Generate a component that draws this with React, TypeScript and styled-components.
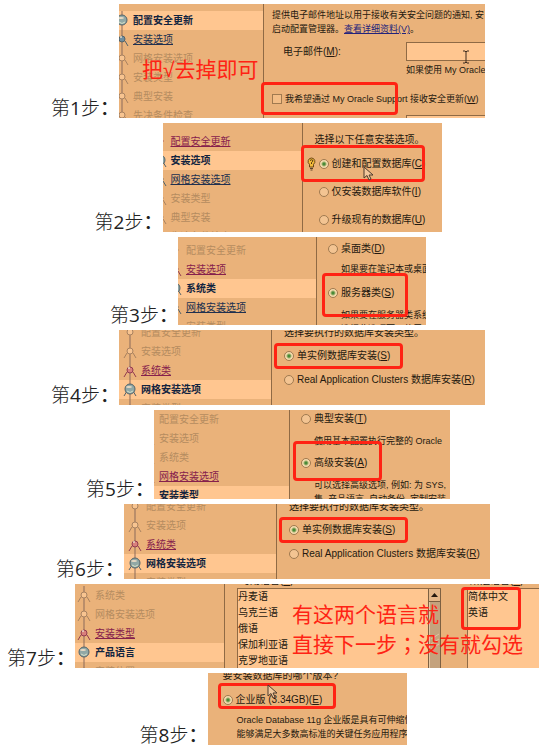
import React from "react";
import styled, { createGlobalStyle, css } from "styled-components";

const GlobalStyle = createGlobalStyle`
  * { box-sizing: border-box; }
  body { margin: 0; background: #ffffff; }
  svg { flex: none; }
`;

const uiFont = `"Liberation Sans", "Noto Sans CJK SC", sans-serif`;
const color = {
  panel: "#eab27a",
  light: "#ffc690",
  ink: "#24190f",
  dim: "#b58c60",
  link: "#20304f",
  visited: "#86204c",
  strong: "#12243f",
  line: "#8f6a45",
  red: "#ff2314",
};

const Page = styled.main`
  display: flex;
  flex-direction: column;
  gap: 5px;
  padding: 4px 0 2px;
`;

const StepGroup = styled.div<{ $inset: number }>`
  display: flex;
  flex-direction: column;
  gap: 5px;
  padding-right: ${(p) => p.$inset}px;
`;

const StepRow = styled.section`
  display: flex;
  justify-content: center;
  align-items: flex-end;
`;

const StepLabel = styled.h2`
  flex: 0 0 68px;
  margin: 0;
  font: 300 19px/20px "Open Sans", "Noto Sans CJK SC", sans-serif;
  color: #222222;
  white-space: nowrap;
`;

const Digit = styled.span`
  font-weight: 400;
`;

const Colon = styled.span`
  font-weight: 500;
`;

const Panel = styled.div<{ $width: number; $height: number }>`
  position: relative;
  display: flex;
  flex: 0 1 ${(p) => p.$width}px;
  height: ${(p) => p.$height}px;
  overflow: hidden;
  background: ${color.panel};
  color: ${color.ink};
  font: 10px/14px ${uiFont};
  white-space: nowrap;
`;

const Sidebar = styled.nav<{ $width: number; $top: number }>`
  flex: 0 0 ${(p) => p.$width}px;
  height: max-content;
  min-height: 100%;
  margin-top: ${(p) => p.$top}px;
`;

const Divider = styled.div`
  flex: 0 0 1px;
  background: ${color.line};
`;

type Tone = "dim" | "link" | "visited" | "current";

const NavRow = styled.div<{ $current: boolean }>`
  display: flex;
  align-items: center;
  height: 19px;
  background: ${(p) => (p.$current ? color.light : "transparent")};
`;

const Rail = styled.span<{ $width: number }>`
  display: flex;
  justify-content: flex-end;
  flex: 0 0 ${(p) => p.$width}px;
  overflow: hidden;
`;

const NavLink = styled.a<{ $tone: Tone }>`
  color: ${(p) => (p.$tone === "visited" ? color.visited : p.$tone === "link" ? color.link : p.$tone === "current" ? color.strong : color.dim)};
  font-weight: ${(p) => (p.$tone === "current" ? 700 : 400)};
  text-decoration: ${(p) => (p.$tone === "link" || p.$tone === "visited" ? "underline" : "none")};
  text-underline-offset: 1px;
`;

const Content = styled.div<{ $top: number; $left?: number }>`
  flex: 1 1 0;
  min-width: 0;
  margin-top: ${(p) => p.$top}px;
  padding-left: ${(p) => p.$left ?? 12}px;
`;

const Choices = styled.div`
  margin-top: 3px;
  padding-left: 4px;
`;

const Copy = styled.p<{ $above?: number; $indent?: number }>`
  margin: ${(p) => p.$above ?? 0}px 0 0;
  padding-left: ${(p) => p.$indent ?? 0}px;
  font-size: 9px;
`;

const Prompt = styled.p`
  margin: 0;
`;

const InlineLink = styled.a`
  color: #23237c;
`;

const Choice = styled.label<{ $above?: number; $height?: number }>`
  display: flex;
  align-items: center;
  gap: 3px;
  height: ${(p) => p.$height ?? 16}px;
  margin-top: ${(p) => p.$above ?? 0}px;
`;

const HintSlot = styled.span`
  display: flex;
  flex: 0 0 9px;
  margin-left: -12px;
`;

const boxBase = css`
  appearance: none;
  flex: none;
  width: 10px;
  height: 10px;
  margin: 0;
  border: 1px solid #a07a50;
`;

const Radio = styled.input`
  ${boxBase}
  border-radius: 50%;
  background: #f3c492;
  &:checked {
    background: radial-gradient(circle, #4a8a36 0 1px, #f6dcae 3px);
  }
`;

const Tick = styled.input`
  ${boxBase}
  background: #f3bd86;
`;

const TickLabel = styled.label`
  display: flex;
  align-items: center;
  gap: 3px;
  height: 20px;
  margin-top: 12px;
  font-size: 9px;
`;

const EmailForm = styled.div`
  display: grid;
  grid-template-columns: 123px 1fr;
  align-items: center;
  margin-top: 6px;
  padding-left: 11px;
`;

const TextBox = styled.input`
  width: 100%;
  height: 19px;
  border: 1px solid ${color.line};
  border-right: 0;
  border-radius: 0;
  background: ${color.light};
`;

const EmailHint = styled.span`
  grid-column: 2;
  margin-top: 2px;
  font-size: 9px;
`;

const ServerBox = styled(TextBox)`
  grid-column: 2;
`;

const Frame = styled.div<{ $x: number; $y: number; $w: number; $h: number }>`
  position: absolute;
  left: ${(p) => p.$x}px;
  top: ${(p) => p.$y}px;
  width: ${(p) => p.$w}px;
  height: ${(p) => p.$h}px;
  border: 3px solid ${color.red};
  border-radius: 4px;
  pointer-events: none;
`;

const Note = styled.p<{ $x: number; $y: number }>`
  position: absolute;
  left: ${(p) => p.$x}px;
  top: ${(p) => p.$y}px;
  margin: 0;
  color: ${color.red};
  font: 400 21px/28px ${uiFont};
`;

const CenteredMark = styled.span`
  font-family: "Noto Sans CJK TC", sans-serif;
`;

const Pointer = styled.svg<{ $x: number; $y: number }>`
  position: absolute;
  left: ${(p) => p.$x}px;
  top: ${(p) => p.$y}px;
`;

const Languages = styled.div`
  display: grid;
  grid-template-columns: 204px 1fr;
  column-gap: 26px;
  flex: 1 1 0;
  min-width: 0;
  margin-top: -10px;
  padding-left: 12px;
`;

const ListTitle = styled.div`
  height: 14px;
  padding-left: 3px;
`;

const ListBody = styled.div`
  display: flex;
  height: 100%;
  border: solid ${color.line};
  border-width: 1px 0 0 1px;
  background: ${color.light};
`;

const Options = styled.ul`
  flex: 1;
  margin: 0;
  padding: 0;
  list-style: none;
  line-height: 16px;
`;

const ScrollBar = styled.div`
  display: flex;
  flex-direction: column;
  flex: 0 0 13px;
  border: solid #7d6042;
  border-width: 0 1px;
  background: #c9a883;
`;

const ScrollUp = styled.button`
  display: flex;
  align-items: center;
  justify-content: center;
  height: 13px;
  padding: 0;
  border: 0;
  border-bottom: 1px solid #7d6042;
  background: #e5b88a;
`;

const Thumb = styled.div`
  display: flex;
  align-items: center;
  justify-content: center;
  flex: 1;
  border-left: 1px solid #e6c8a4;
  background: #c4a27d;
`;

interface NavItem {
  text: string;
  tone: Tone;
  legs?: boolean;
}

const Node = ({ tone, legs = true }: { tone: Tone; legs?: boolean }) => {
  const stroke = tone === "dim" ? "#a98260" : tone === "visited" ? "#923c50" : "#53636a";
  const fill = tone === "dim" ? "#f8c490" : tone === "visited" ? "#d9807c" : tone === "link" ? "#6f8ea0" : "#91a8a6";
  const r = tone === "current" ? 5 : 3;
  return (
    <svg width="22" height="19" viewBox="0 0 22 19" aria-hidden="true">
      <path d="M11 0V19" stroke="#8b6a5a" />
      {legs && <path d="M8 11L5 16M14 11L17 16" stroke={stroke} fill="none" />}
      <circle cx="11" cy="9" r={r} fill={fill} stroke={stroke} />
      {tone !== "dim" && <ellipse cx="10" cy="7" rx={r - 2} ry="1" fill="#e8d9c4" />}
      {tone === "current" && <path d="M8 11Q11 14 14 11" stroke="#d5e0c8" fill="none" />}
    </svg>
  );
};

const Nav = ({ items, width, top, rail }: { items: NavItem[]; width: number; top: number; rail: number }) => (
  <>
    <Sidebar $width={width} $top={top}>
      {items.map((item) => (
        <NavRow key={item.text} $current={item.tone === "current"}>
          <Rail $width={rail}>
            <Node tone={item.tone} legs={item.legs} />
          </Rail>
          <NavLink $tone={item.tone} href="#">{item.text}</NavLink>
        </NavRow>
      ))}
    </Sidebar>
    <Divider />
  </>
);

const Step = ({ n, width, height, children }: { n: number; width: number; height: number; children: React.ReactNode }) => (
  <StepRow>
    <StepLabel>第<Digit>{n}</Digit>步<Colon>：</Colon></StepLabel>
    <Panel $width={width} $height={height}>{children}</Panel>
  </StepRow>
);

interface OptionProps {
  group: string;
  text: string;
  hotkey: string;
  checked?: boolean;
  above?: number;
  height?: number;
  hint?: boolean;
}

const Option = ({ group, text, hotkey, checked, above, height, hint }: OptionProps) => (
  <Choice $above={above} $height={height}>
    {hint && (
      <HintSlot>
        <svg width="9" height="14" viewBox="0 0 9 14" aria-hidden="true">
          <path d="M4.500 1a3.500 3.500 0 0 0-2 6.300V10h4V7.300a3.500 3.500 0 0 0-2-6.300Z" fill="#f5bd3c" stroke="#6b4717" />
          <path d="M3 3.500q1.500-1.500 3 0q0 1-1.500 2V7" stroke="#53350e" fill="none" />
          <path d="M3 11.500h3M3.500 13h2" stroke="#5b432a" />
        </svg>
      </HintSlot>
    )}
    <Radio type="radio" name={group} defaultChecked={checked} />
    <span>{text}(<u>{hotkey}</u>)</span>
  </Choice>
);

const Arrow = ({ x, y }: { x: number; y: number }) => (
  <Pointer $x={x} $y={y} width="12" height="16" viewBox="0 0 12 16" aria-hidden="true">
    <path d="M1 1V12L4 9.500L6 14L8 13L6 9H10Z" fill="#f2c79c" stroke="#4d3b2c" />
  </Pointer>
);

const singleInstanceNav: NavItem[] = [
  { text: "配置安全更新", tone: "dim", legs: false },
  { text: "安装选项", tone: "dim" },
  { text: "系统类", tone: "visited" },
  { text: "网格安装选项", tone: "current" },
  { text: "安装类型", tone: "dim" },
];

const SingleInstance = ({ n }: { n: number }) => (
  <Step n={n} width={366} height={75}>
    <Nav width={152} top={-7} rail={22} items={singleInstanceNav} />
    <Content $top={-4}>
      <Prompt>选择要执行的数据库安装类型。</Prompt>
      <Option group={`step${n}`} text="单实例数据库安装" hotkey="S" checked above={8} />
      <Option group={`step${n}`} text="Real Application Clusters 数据库安装" hotkey="R" above={8} />
    </Content>
    <Frame $x={155} $y={13} $w={129} $h={26} />
  </Step>
);

export default function App() {
  return (
    <>
      <GlobalStyle />
      <Page>
        <StepGroup $inset={18}>
          <Step n={1} width={366} height={114}>
            <Nav
              width={144}
              top={7}
              rail={14}
              items={[
                { text: "配置安全更新", tone: "current", legs: false },
                { text: "安装选项", tone: "link" },
                { text: "网格安装选项", tone: "dim" },
                { text: "安装类型", tone: "dim" },
                { text: "典型安装", tone: "dim" },
                { text: "先决条件检查", tone: "dim" },
              ]}
            />
            <Content $top={4} $left={8}>
              <Copy>提供电子邮件地址以用于接收有关安全问题的通知, 安</Copy>
              <Copy>启动配置管理器。<InlineLink href="#">查看详细资料(V)</InlineLink>。</Copy>
              <EmailForm>
                <label htmlFor="email">电子邮件(<u>M</u>):</label>
                <TextBox id="email" type="email" />
                <EmailHint>如果使用 My Oracle</EmailHint>
              </EmailForm>
              <TickLabel>
                <Tick type="checkbox" />
                <span>我希望通过 My Oracle Support 接收安全更新(<u>W</u>)</span>
              </TickLabel>
              <EmailForm>
                <ServerBox type="password" aria-label="My Oracle Support 口令" />
              </EmailForm>
            </Content>
            <Frame $x={142} $y={78} $w={137} $h={33} />
            <Note $x={23} $y={52}>把√去掉即可</Note>
            <Pointer $x={343} $y={46} width="8" height="14" viewBox="0 0 8 14" aria-hidden="true">
              <path d="M1 1H3L4 2L5 1H7M4 2V12M1 13H3L4 12L5 13H7" stroke="#3c2b1e" fill="none" />
            </Pointer>
          </Step>

          <Step n={2} width={279} height={109}>
            <Nav
              width={139}
              top={9}
              rail={8}
              items={[
                { text: "配置安全更新", tone: "visited", legs: false },
                { text: "安装选项", tone: "current" },
                { text: "网格安装选项", tone: "link" },
                { text: "安装类型", tone: "dim" },
                { text: "典型安装", tone: "dim" },
                { text: "先决条件检查", tone: "dim" },
              ]}
            />
            <Content $top={10}>
              <Prompt>选择以下任意安装选项。</Prompt>
              <Choices>
                <Option group="step2" text="创建和配置数据库" hotkey="C" checked height={28} hint />
                <Option group="step2" text="仅安装数据库软件" hotkey="I" height={28} />
                <Option group="step2" text="升级现有的数据库" hotkey="U" height={28} />
              </Choices>
            </Content>
            <Frame $x={138} $y={22} $w={124} $h={37} />
            <Arrow x={200} y={43} />
          </Step>

          <Step n={3} width={248} height={88}>
            <Nav
              width={138}
              top={4}
              rail={8}
              items={[
                { text: "配置安全更新", tone: "dim", legs: false },
                { text: "安装选项", tone: "visited" },
                { text: "系统类", tone: "current" },
                { text: "网格安装选项", tone: "link" },
                { text: "安装类型", tone: "dim" },
              ]}
            />
            <Content $top={4} $left={11}>
              <Option group="step3" text="桌面类" hotkey="D" />
              <Copy $above={5} $indent={13}>如果要在笔记本或桌面</Copy>
              <Option group="step3" text="服务器类" hotkey="S" checked above={9} />
              <Copy $above={7} $indent={13}>如果要在服务器类系统</Copy>
              <Copy $indent={13}>选择此选项可以使用</Copy>
            </Content>
            <Frame $x={144} $y={36} $w={86} $h={44} />
          </Step>

          <SingleInstance n={4} />

          <Step n={5} width={296} height={89}>
            <Nav
              width={135}
              top={0}
              rail={5}
              items={[
                { text: "配置安全更新", tone: "dim", legs: false },
                { text: "安装选项", tone: "dim" },
                { text: "系统类", tone: "dim" },
                { text: "网格安装选项", tone: "visited" },
                { text: "安装类型", tone: "current" },
              ]}
            />
            <Content $top={1} $left={11}>
              <Option group="step5" text="典型安装" hotkey="T" />
              <Copy $above={7} $indent={13}>使用基本配置执行完整的 Oracle</Copy>
              <Option group="step5" text="高级安装" hotkey="A" checked above={7} />
              <Copy $above={7} $indent={13}>可以选择高级选项, 例如: 为 SYS,</Copy>
              <Copy $indent={13}>集, 产品语言, 自动备份, 定制安装</Copy>
            </Content>
            <Frame $x={139} $y={31} $w={89} $h={40} />
          </Step>
        </StepGroup>

        <StepGroup $inset={8}>
          <SingleInstance n={6} />

          <Step n={7} width={464} height={84}>
            <Nav
              width={149}
              top={2}
              rail={20}
              items={[
                { text: "系统类", tone: "dim" },
                { text: "网格安装选项", tone: "dim" },
                { text: "安装类型", tone: "visited" },
                { text: "产品语言", tone: "current", legs: false },
                { text: "安装位置", tone: "dim" },
              ]}
            />
            <Languages>
              <div>
                <ListTitle>可用语言(<u>A</u>):</ListTitle>
                <ListBody>
                  <Options role="listbox" aria-label="可用语言">
                    {["丹麦语", "乌克兰语", "俄语", "保加利亚语", "克罗地亚语"].map((name) => (
                      <li role="option" aria-selected={false} key={name}>{name}</li>
                    ))}
                  </Options>
                  <ScrollBar>
                    <ScrollUp aria-label="向上滚动">
                      <svg width="7" height="4" viewBox="0 0 7 4" aria-hidden="true">
                        <path d="M0 4L3.500 0L7 4Z" fill="#24190f" />
                      </svg>
                    </ScrollUp>
                    <Thumb>
                      <svg width="9" height="20" viewBox="0 0 9 20" aria-hidden="true">
                        <path d="M0 6L8 1M0 11L8 6M0 16L8 11" stroke="#dfc3a2" />
                      </svg>
                    </Thumb>
                  </ScrollBar>
                </ListBody>
              </div>
              <div>
                <ListTitle>所选语言(<u>S</u>):</ListTitle>
                <ListBody>
                  <Options role="listbox" aria-label="所选语言">
                    {["简体中文", "英语"].map((name) => (
                      <li role="option" aria-selected={false} key={name}>{name}</li>
                    ))}
                  </Options>
                </ListBody>
              </div>
            </Languages>
            <Frame $x={386} $y={3} $w={60} $h={43} />
            <Note $x={217} $y={17}>
              有这两个语言就
              <br />
              直接下一步<CenteredMark>；</CenteredMark>没有就勾选
            </Note>
          </Step>

          <Step n={8} width={199} height={72}>
            <Content $top={-4} $left={15}>
              <Prompt>要安装数据库的哪个版本?</Prompt>
              <Option group="step8" text="企业版 (3.34GB)" hotkey="E" checked above={9} />
              <Copy $above={5} $indent={14}>Oracle Database 11g 企业版是具有可伸缩性</Copy>
              <Copy $indent={14}>能够满足大多数高标准的关键任务应用程序</Copy>
            </Content>
            <Frame $x={10} $y={10} $w={118} $h={26} />
            <Arrow x={59} y={11} />
          </Step>
        </StepGroup>
      </Page>
    </>
  );
}
